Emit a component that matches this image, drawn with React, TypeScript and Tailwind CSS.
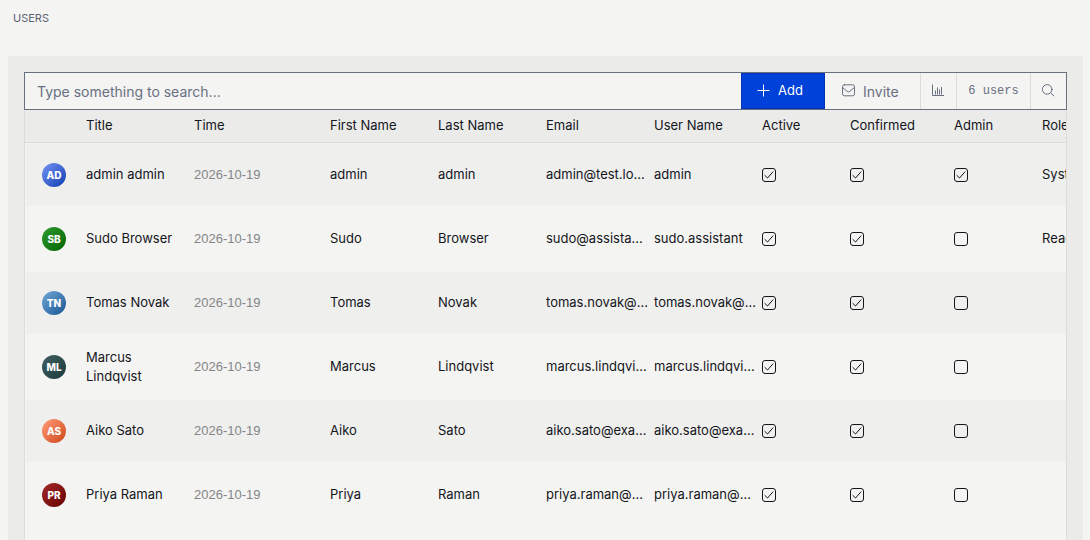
import { useState } from 'react';

type User = {
  initials: string;
  avatar: string;
  title: string;
  time: string;
  first: string;
  last: string;
  email: string;
  userName: string;
  active: boolean;
  confirmed: boolean;
  admin: boolean;
  role: string;
};

const users: User[] = [
  { initials: 'AD', avatar: 'from-[#7794f5] to-[#0b3bb0]', title: 'admin admin', time: '2026-10-19', first: 'admin', last: 'admin', email: 'admin@test.local', userName: 'admin', active: true, confirmed: true, admin: true, role: 'System' },
  { initials: 'SB', avatar: 'from-[#2e9b2e] to-[#006400]', title: 'Sudo Browser', time: '2026-10-19', first: 'Sudo', last: 'Browser', email: 'sudo@assistant.io', userName: 'sudo.assistant', active: true, confirmed: true, admin: false, role: 'Reader' },
  { initials: 'TN', avatar: 'from-[#73a9d8] to-[#145591]', title: 'Tomas Novak', time: '2026-10-19', first: 'Tomas', last: 'Novak', email: 'tomas.novak@example.com', userName: 'tomas.novak@example.com', active: true, confirmed: true, admin: false, role: '' },
  { initials: 'ML', avatar: 'from-[#41605f] to-[#1c3b3c]', title: 'Marcus Lindqvist', time: '2026-10-19', first: 'Marcus', last: 'Lindqvist', email: 'marcus.lindqvist@example.com', userName: 'marcus.lindqvist@example.com', active: true, confirmed: true, admin: false, role: '' },
  { initials: 'AS', avatar: 'from-[#ff9d78] to-[#cf4310]', title: 'Aiko Sato', time: '2026-10-19', first: 'Aiko', last: 'Sato', email: 'aiko.sato@example.com', userName: 'aiko.sato@example.com', active: true, confirmed: true, admin: false, role: '' },
  { initials: 'PR', avatar: 'from-[#a52a2a] to-[#650000]', title: 'Priya Raman', time: '2026-10-19', first: 'Priya', last: 'Raman', email: 'priya.raman@example.com', userName: 'priya.raman@example.com', active: true, confirmed: true, admin: false, role: '' },
];

const headings = ['Title', 'Time', 'First Name', 'Last Name', 'Email', 'User Name', 'Active', 'Confirmed', 'Admin', 'Role'];

function PlusIcon() {
  return (
    <svg width="14" height="14" viewBox="0 0 14 14" fill="none" stroke="currentColor" aria-hidden="true">
      <path d="M7.5 0.5v12M1.5 6.5h12" />
    </svg>
  );
}

function MailIcon() {
  return (
    <svg width="14" height="14" viewBox="0 0 14 14" fill="none" stroke="currentColor" strokeLinecap="round" strokeLinejoin="round" aria-hidden="true">
      <rect x="1.5" y="0.8" width="12" height="11" rx="2" />
      <path d="M1.7 3.6l4.5 3.8a2 2 0 0 0 2.6 0l4.5-3.8" />
    </svg>
  );
}

function ChartIcon() {
  return (
    <svg width="14" height="14" viewBox="0 0 14 14" fill="none" stroke="currentColor" aria-hidden="true">
      <path d="M1.5 0.5v11h11.5M4.5 6.5v4M6.5 3.5v7M8.5 5.5v5M10.5 3v7.5" />
    </svg>
  );
}

function SearchIcon() {
  return (
    <svg width="14" height="14" viewBox="0 0 14 14" fill="none" stroke="currentColor" strokeLinecap="round" aria-hidden="true">
      <circle cx="6.2" cy="5.4" r="4.8" />
      <path d="M9.7 8.9l3.2 3" />
    </svg>
  );
}

function Tick({ label, initial }: { label: string; initial: boolean }) {
  const [checked, setChecked] = useState(initial);
  return (
    <span className="grid size-3.5">
      <input
        type="checkbox"
        aria-label={label}
        checked={checked}
        onChange={(e) => setChecked(e.target.checked)}
        className="peer col-start-1 row-start-1 size-3.5 appearance-none rounded-[3px] border border-[#14161c]"
      />
      <svg
        className="pointer-events-none invisible col-start-1 row-start-1 peer-checked:visible"
        width="14"
        height="14"
        viewBox="0 0 14 14"
        fill="none"
        stroke="#14161c"
        aria-hidden="true"
      >
        <path d="M2.6 7.2l2.9 2.8 5.7-6.4" />
      </svg>
    </span>
  );
}

export default function App() {
  return (
    <div className="flex min-h-screen flex-col bg-[#f4f4f2] pr-[7px] pl-2 font-['Inter','Liberation_Sans',sans-serif] text-[13px] text-[#14161c]">
      <header className="flex h-14 items-start px-[5px] pt-2.5">
        <h1 className="text-[11px] leading-4 text-[#5d6372]">USERS</h1>
      </header>

      <main className="flex flex-1 flex-col bg-[#ebebea] px-4 pt-4">
        <div className="flex h-[38px] border border-[#687082] bg-[#f4f4f2] text-[#687082]">
          <input
            type="search"
            aria-label="Search users"
            placeholder="Type something to search..."
            className="min-w-0 flex-1 bg-transparent px-3 text-[14px] outline-none placeholder:text-[#687082]"
          />
          <button type="button" className="flex w-[84px] items-center gap-2 border border-[#0433b4] bg-[#0041d9] pl-3.5 text-white">
            <PlusIcon />
            Add
          </button>
          <button type="button" className="flex w-24 items-center gap-2 border-r border-[#dcdcdb] pl-4 text-[14px]">
            <MailIcon />
            Invite
          </button>
          <button type="button" aria-label="Statistics" className="flex w-9 items-center border-r border-[#dcdcdb] pl-2.5">
            <ChartIcon />
          </button>
          <span className="flex w-[74px] items-center justify-center border-r border-[#dcdcdb] font-['Liberation_Mono',monospace] text-[12px]">
            6 users
          </span>
          <button type="button" aria-label="Search" className="flex w-[35px] items-center pl-2.5">
            <SearchIcon />
          </button>
        </div>

        <div className="flex-1 overflow-hidden border-x border-[#dcdcdb] bg-[#f4f4f2]">
          <table className="w-[1125px] table-fixed border-separate border-spacing-0 text-left">
            <colgroup>
              <col className="w-[61px]" />
              <col className="w-[108px]" />
              <col className="w-[136px]" />
              <col className="w-[108px]" />
              <col className="w-[108px]" />
              <col className="w-[108px]" />
              <col className="w-[108px]" />
              <col className="w-[88px]" />
              <col className="w-[104px]" />
              <col className="w-[88px]" />
              <col className="w-[108px]" />
            </colgroup>
            <thead className="bg-[#ebebea]">
              <tr className="h-[33px]">
                <th className="border-b border-[#dcdcdb]" aria-label="Avatar" />
                {headings.map((h) => (
                  <th key={h} scope="col" className="border-b border-[#dcdcdb] p-0 font-normal">
                    {h}
                  </th>
                ))}
              </tr>
            </thead>
            <tbody>
              {users.map((u) => (
                <tr
                  key={u.initials}
                  className="h-16 odd:bg-[#efefee] *:border-y *:border-[#f4f4f2] *:py-0 *:pr-1"
                >
                  <td className="border-l pl-4">
                    <span className={`flex size-6 items-center justify-center rounded-full bg-linear-135 text-[10px] font-extrabold text-white ${u.avatar}`}>
                      {u.initials}
                    </span>
                  </td>
                  <td>{u.title}</td>
                  <td className="font-['Liberation_Sans',sans-serif] text-[#858688]">{u.time}</td>
                  <td>{u.first}</td>
                  <td>{u.last}</td>
                  <td className="truncate">{u.email}</td>
                  <td className="truncate">{u.userName}</td>
                  <td><Tick label={`${u.title} active`} initial={u.active} /></td>
                  <td><Tick label={`${u.title} confirmed`} initial={u.confirmed} /></td>
                  <td><Tick label={`${u.title} admin`} initial={u.admin} /></td>
                  <td className="truncate">{u.role}</td>
                </tr>
              ))}
            </tbody>
          </table>
        </div>
      </main>
    </div>
  );
}
